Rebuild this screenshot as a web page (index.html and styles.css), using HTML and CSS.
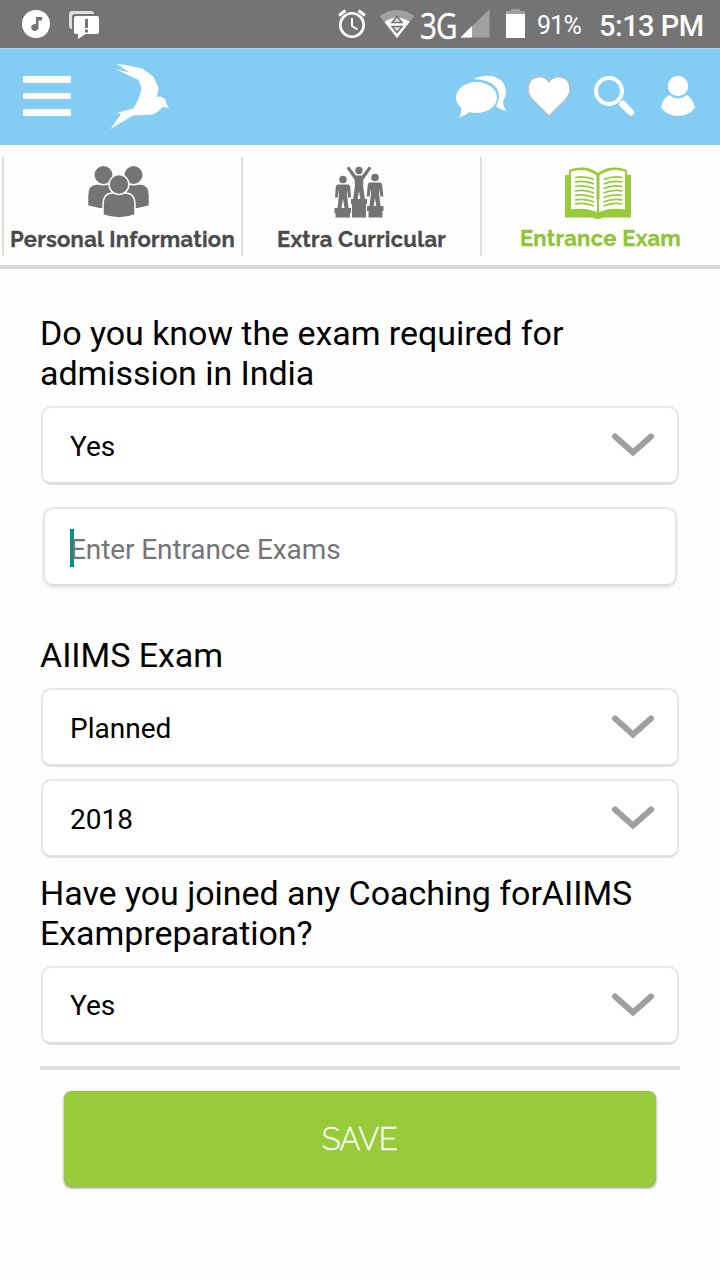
FILE: index.html
```html
<!DOCTYPE html>
<html lang="en">
<head>
<meta charset="utf-8">
<title>Entrance Exam</title>
<link rel="stylesheet" href="styles.css">
</head>
<body>
<div class="status">
  <svg class="notice" width="80" height="32" viewBox="21 8 80 32">
    <circle cx="36" cy="24" r="14" fill="#fff"/>
    <path d="M36 17h6v3.500h-3.500v7.500a3.700 3.500 0 1 1-2.500-3.800z" fill="#747474"/>
    <path d="M72 29Q69 29 69 26V14q0-3 3-3h19q3 0 3 3H75q-3 0-3 3z" fill="#dedede"/>
    <path d="M76 16h21q2 0 2 2v14q0 2-2 2H85.500L78 39v-5h-2q-2 0-2-2V18q0-2 2-2z" fill="#fff"/>
    <path d="M85 19h3v9h-3zM85 29.500h3v3h-3z" fill="#747474"/>
  </svg>
  <svg class="alarm" width="28" height="32" viewBox="338 8 28 32" fill="none" stroke="#fff">
    <circle cx="352" cy="25" r="11.700" stroke-width="2.600"/>
    <path d="M352 18v8l5.500 3.500" stroke-width="2"/>
    <path d="M339 15.500l6.500-5M365 15.500l-6.500-5" stroke-width="3"/>
  </svg>
  <svg class="wifi" width="36" height="32" viewBox="379 8 36 32">
    <path d="M379.500 16Q397 4 414.500 16L397 38z" fill="#a0a0a0"/>
    <path d="M384.500 22Q397 13 409.500 22L397 38z" fill="#fff"/>
    <path d="M392 22.500l5-6 5 6zM392 26.500h10l-5 6z" fill="#ddd" stroke="#747474" stroke-width="1.500"/>
  </svg>
  <span class="network">3G</span>
  <svg class="signal" width="30" height="32" viewBox="460 8 30 32">
    <path d="M460.500 37.500L489.500 9v28.500z" fill="#a0a0a0"/>
    <path d="M460.500 37.500L472 26v11.500z" fill="#fff"/>
  </svg>
  <svg class="battery" width="20" height="32" viewBox="506 8 20 32">
    <path d="M506 14v-3h5V9h9v2h5v3z" fill="#a0a0a0"/>
    <path d="M506 14h19v24h-19z" fill="#fff"/>
  </svg>
  <span class="percent">91%</span>
  <span class="clock">5:13 PM</span>
</div>
<header class="appbar">
  <div class="menu"><i></i><i></i><i></i></div>
  <svg class="bird" width="60" height="66" viewBox="110 64 60 66" fill="#fff">
    <path d="M117 64L126 65L142 68.500L153.500 76.500L158.500 88L157 97Q160 95.500 164 98Q166 100 166.500 104L169 108L162.500 107Q159 112 153 114.500L133 115.500L110.500 129L121 114L117 113L133 108.500Q139 101 141.500 88L138.500 80L115.500 69L129 72.500Z"/>
  </svg>
  <div class="actions">
    <svg width="50" height="44" viewBox="456 74 50 44" fill="#fff">
      <path d="M473 79C492 71 506 79 506 92Q506 97 503 101Q503 106 506 111Q500 110 496 106C503 94 499 80 473 79Z"/>
      <ellipse cx="476.500" cy="97.500" rx="20.500" ry="15.500"/>
      <path d="M461 106Q462 112 459 117.500Q465 116 471 111z"/>
    </svg>
    <svg width="46" height="44" viewBox="526 74 46 44">
      <path d="M549 116L532.500 99.500C525 91 527.500 78 538 77Q545 76 549 82Q553 76 560 77C570.500 78 573 91 565.500 99.500Z" fill="#fff" stroke="#bdbdbd" stroke-width="1.300"/>
    </svg>
    <svg width="42" height="44" viewBox="593 74 42 44" fill="none" stroke="#fff">
      <circle cx="609" cy="91" r="13" stroke-width="4"/>
      <path d="M622.500 104l8.500 8.500" stroke-width="6.500" stroke-linecap="round"/>
      <path d="M621.300 102.700l4 4" stroke-width="7"/>
    </svg>
    <svg width="36" height="44" viewBox="660 74 36 44" fill="#fff">
      <circle cx="678" cy="86" r="10.200"/>
      <path d="M669 95Q678 102 687 95Q693 99 695 108Q688 116 678 116Q668 116 661 108Q662 100 669 95z"/>
    </svg>
  </div>
</header>
<nav class="tabs">
  <div class="tab">
    <svg width="66" height="56" viewBox="85 164 66 56" fill="#747474" stroke="#fff" stroke-width="1.500">
      <path d="M87.500 206V196q0-12 9-12h12q11 0 11 12v12q-16 3-32-2zM149.500 206V196q0-12-9-12h-12q-11 0-11 12v12q16 3 32-2z"/>
      <circle cx="103.500" cy="175" r="9.700"/><circle cx="133.500" cy="175" r="9.700"/>
      <path d="M103 215V205q0-12 10-12h12q10 0 10 12v10q-16 6-32 0z"/>
      <circle cx="119" cy="184.500" r="9.900"/>
    </svg>
    <span>Personal Information</span>
  </div>
  <div class="tab extra">
    <svg width="50" height="56" viewBox="334 164 50 56" fill="#747474">
      <circle cx="343" cy="179.500" r="3.800"/>
      <path d="M338 184.500h10q2 0 2.300 3l.7 10h-2.800l-1.200-8v5l1.500 13.500h-4l-1.500-9-1.500 9h-4l1.500-13.500v-5l-1.200 8H335l.7-10q.3-3 2.300-3z"/>
      <circle cx="375" cy="177.500" r="3.800"/>
      <path d="M370 182.500h10q2 0 2.300 3l1 11h-2.800l-1.500-8v5l1.700 13.500h-4.200l-1.500-9-1.500 9h-4.200l1.700-13.500v-5l-1.500 8h-2.800l1-11q.3-3 2.300-3z"/>
      <circle cx="359" cy="170.500" r="3.700"/>
      <path d="M346.500 168l2.500-1.500 7 9h6l7-9 2.500 1.500-8.300 12v7l1.800 13h-4.500l-1.500-9-1.500 9H353l1.800-13v-7z"/>
      <path d="M351 199h16v5h-1v13.500h-14V204h-1zM334.500 208H351v5h-1v4.500h-14.500V213h-1zM367 206h16.500v5h-1v6.500h-14V211H367z"/>
    </svg>
    <span>Extra Curricular</span>
  </div>
  <div class="tab active">
    <svg width="68" height="56" viewBox="564 164 68 56">
      <path d="M565 175h4v-5q16-6 29 3q13-9 29-3v5h4v42.500h-28q-5 3-10 0h-28z" fill="#97cb38"/>
      <path d="M571 171.500q14-4.500 26 4V212q-12-5-26-2.500zM625 171.500q-14-4.500-26 4V212q12-5 26-2.500z" fill="#fff"/>
      <path d="M598 175v24" stroke="#97cb38" stroke-width="3"/>
      <path d="M598 199v13" stroke="#97cb38" stroke-width="1"/>
      <path d="M575 177.500q10-2 19 2M575 182q10-2 19 2M575 186.500q10-2 19 2M575 191q10-2 19 2M575 195.500q10-2 19 2M575 200q10-2 19 2M575 204q10-2 19 2M622.500 177.500q-10-2-19 2M622.500 182q-10-2-19 2M622.500 186.500q-10-2-19 2M622.500 191q-10-2-19 2M622.500 195.500q-10-2-19 2M622.500 200q-10-2-19 2M622.500 204q-10-2-19 2" fill="none" stroke="#97cb38" stroke-width="1.600"/>
    </svg>
    <span>Entrance Exam</span>
  </div>
</nav>
<main class="form">
  <div class="label">Do you know the exam required for<br>admission in India</div>
  <div class="field"><span>Yes</span><svg width="44" height="26" viewBox="0 0 44 26"><path d="M4 4.500L22 20.500L40 4.500" class="chevron"/></svg></div>
  <div class="field entry"><i class="caret"></i><span>Enter Entrance Exams</span></div>
  <div class="label exam">AIIMS Exam</div>
  <div class="field"><span>Planned</span><svg width="44" height="26" viewBox="0 0 44 26"><path d="M4 4.500L22 20.500L40 4.500" class="chevron"/></svg></div>
  <div class="field year"><span>2018</span><svg width="44" height="26" viewBox="0 0 44 26"><path d="M4 4.500L22 20.500L40 4.500" class="chevron"/></svg></div>
  <div class="label coaching">Have you joined any Coaching forAIIMS<br>Exampreparation?</div>
  <div class="field last"><span>Yes</span><svg width="44" height="26" viewBox="0 0 44 26"><path d="M4 4.500L22 20.500L40 4.500" class="chevron"/></svg></div>
  <hr class="rule">
  <button class="save">SAVE</button>
</main>
</body>
</html>
```
FILE: styles.css
```css
* { box-sizing: border-box; }
body { margin: 0; width: 720px; height: 1280px; overflow: hidden; background: #fefefe; font-family: Roboto, sans-serif; color: #000; }
svg { display: block; flex: none; }
.status { height: 48px; padding: 0 0 0 21px; background: #747474; color: #fff; display: flex; align-items: center; white-space: nowrap; }
.notice { margin-right: 237px; }
.alarm { margin-right: 13px; }
.wifi { margin-right: 5px; }
.network { width: 40px; font: 37px/48px "Open Sans", sans-serif; letter-spacing: -1px; padding-top: 1px; transform: scaleX(.8); transform-origin: left; -webkit-text-stroke: .4px #fff; }
.signal { margin-right: 16px; }
.battery { margin-right: 11px; }
.percent { width: 62px; font-size: 25px; line-height: 50px; letter-spacing: -.8px; padding-top: 3px; }
.clock { font-size: 29px; font-weight: 500; line-height: 50px; letter-spacing: -.5px; padding-top: 3px; }
.appbar { height: 97px; padding-left: 22.500px; background: #83ccf3; border-top: 1px solid #a8d5ef; display: flex; align-items: center; }
.menu { width: 48px; display: grid; gap: 10px; margin-right: 39.500px; padding-bottom: 2px; }
.menu i { height: 6.600px; background: #fff; }
.actions { margin-left: 286px; display: flex; gap: 20px; padding-bottom: 2px; }
.actions svg:nth-child(3) { margin-left: 1px; }
.actions svg:nth-child(4) { margin-left: 5px; }
.tabs { height: 124px; padding: 12px 0 9px 2px; border-bottom: 4px solid #d9d9d9; display: flex; }
.tab { width: 239px; height: 99px; padding-top: 7px; border-left: 2px solid #dedede; color: #4b4b4b; display: flex; flex-direction: column; align-items: center; font: 700 22px/38px Raleway, Montserrat, "Open Sans", sans-serif; letter-spacing: .25px; -webkit-text-stroke: .3px; white-space: nowrap; }
.tab svg { margin-right: 9px; }
.tab.extra svg { margin-right: 6px; }
.tab.active svg { margin-right: 6px; }
.tab.active { color: #8fc533; line-height: 36px; }
.form { padding: 44px 40px 0; }
.label { font-size: 34px; line-height: 40px; letter-spacing: -.05px; white-space: nowrap; }
.field { height: 79px; margin: 13px 1px 0; padding: 0 22px 0 27px; background: #fff; border: 2px solid #e6e6e6; border-bottom: 3px solid #e0e0e0; border-radius: 10px; display: flex; align-items: center; justify-content: space-between; font-size: 28px; }
.field span { padding-top: 3px; }
.chevron { fill: none; stroke: #9f9f9f; stroke-width: 6; stroke-linecap: round; }
.entry { margin: 22px 3px 0; padding-left: 25px; justify-content: flex-start; color: #757575; letter-spacing: -.1px; border-bottom-width: 2px; box-shadow: 0 2px 3px #0000001a; }
.entry span { padding-top: 6px; }
.caret { width: 4px; height: 38px; margin: 2px -4px 0 0; background: #009688; }
.exam { margin-top: 49px; }
.year { margin-top: 12px; }
.coaching { margin-top: 15px; }
.last span { padding-top: 1px; }
.rule { height: 4px; margin: 21px 0; border: 0; background: #e0e0e0; }
.save { display: block; width: 592px; height: 96px; margin: 0 0 0 23.500px; border: 0; border-radius: 8px; background: #98cb39; box-shadow: 0 1px 3px #0007; color: #fff; font: 300 31px Raleway, Lato, sans-serif; letter-spacing: -.5px; -webkit-text-stroke: .3px #fff; padding: 0; }
```
